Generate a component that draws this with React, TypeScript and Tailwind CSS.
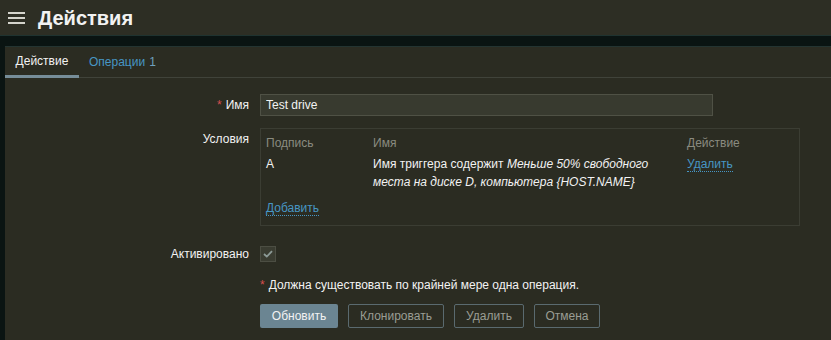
import { useState } from 'react';

const font = { fontFamily: '"Liberation Sans", Arial, sans-serif' };

export default function App() {
  const [name, setName] = useState('Test drive');
  const [enabled, setEnabled] = useState(true);

  return (
    <div className="w-[831px] h-[340px] overflow-hidden bg-[#0a1412] text-[12px] text-[#f2f2f2]" style={font}>
      <header className="h-[36px] bg-[#2d2e24] flex items-center border-b border-[#1f3330]">
        <button className="ml-[8px] w-[17px] h-[12px] flex flex-col justify-between">
          <span className="block h-[2px] w-full bg-[#d4d4cc]" />
          <span className="block h-[2px] w-full bg-[#d4d4cc]" />
          <span className="block h-[2px] w-full bg-[#d4d4cc]" />
        </button>
        <h1 className="ml-[13px] text-[20px] leading-none font-bold text-[#f2f2f2]">Действия</h1>
      </header>

      <div className="ml-[5px] mt-[10px] h-[294px] bg-[#2b2c22] border-t border-[#243431]">
        <nav className="h-[31px] flex items-end border-b border-[#40433a]">
          <div className="w-[74px] h-[31px] flex items-center justify-center border-b-[3px] border-[#768d99] -mb-px">
            <span className="text-[#f2f2f2]">Действие</span>
          </div>
          <div className="h-[31px] flex items-center ml-[10px]">
            <span className="text-[#4796c4]">Операции</span>
            <span className="ml-[4px] text-[#6fa0bd]">1</span>
          </div>
        </nav>

        <form className="pt-[16px] grid grid-cols-[244px_1fr] gap-x-[11px]">
          <label className="text-right leading-[22px]">
            <span className="text-[#d64e4e] mr-[4px]">*</span>Имя
          </label>
          <input
            className="w-[453px] h-[22px] px-[5px] bg-[#383a2f] border border-[#4f5145] text-[#f2f2f2] outline-none"
            value={name}
            onChange={(e) => setName(e.target.value)}
          />

          <label className="mt-[12px] text-right leading-[22px]">Условия</label>
          <div className="mt-[12px] w-[540px] h-[98px] border border-[#3b3d33] px-[5px] pt-[5px]">
            <div className="grid grid-cols-[107px_314px_1fr] text-[#8a8b80] leading-[18px]">
              <span>Подпись</span>
              <span>Имя</span>
              <span>Действие</span>
            </div>
            <div className="grid grid-cols-[107px_314px_1fr] mt-[3px] leading-[18px]">
              <span>A</span>
              <span>
                Имя триггера содержит <i>Меньше 50% свободного</i>
                <br />
                <i>места на диске D, компьютера {'{HOST.NAME}'}</i>
              </span>
              <span>
                <a className="text-[#4796c4] border-b border-dotted border-[#4796c4] cursor-pointer">Удалить</a>
              </span>
            </div>
            <div className="mt-[8px] leading-[18px]">
              <a className="text-[#4796c4] border-b border-dotted border-[#4796c4] cursor-pointer">Добавить</a>
            </div>
          </div>

          <label className="mt-[20px] text-right leading-[16px]">Активировано</label>
          <div className="mt-[20px]">
            <button
              type="button"
              onClick={() => setEnabled(!enabled)}
              className="w-[16px] h-[16px] bg-[#3a3c31] border border-[#4c4e43] flex items-center justify-center"
            >
              {enabled && (
                <svg width="10" height="8" viewBox="0 0 10 8">
                  <path d="M1 4 L3.8 6.6 L9 1.2" stroke="#8c9a96" strokeWidth="1.8" fill="none" />
                </svg>
              )}
            </button>
          </div>

          <div />
          <p className="mt-[16px] leading-[14px]">
            <span className="text-[#d64e4e] mr-[4px]">*</span>Должна существовать по крайней мере одна операция.
          </p>

          <div />
          <div className="mt-[12px] flex gap-[10px]">
            <button type="button" className="w-[78px] h-[24px] bg-[#6b8592] text-[#f2f2f2] rounded-[2px]">Обновить</button>
            <button type="button" className="w-[96px] h-[24px] border border-[#5a6a6f] text-[#9a9d94] rounded-[2px]">Клонировать</button>
            <button type="button" className="w-[70px] h-[24px] border border-[#5a6a6f] text-[#9a9d94] rounded-[2px]">Удалить</button>
            <button type="button" className="w-[66px] h-[24px] border border-[#5a6a6f] text-[#9a9d94] rounded-[2px]">Отмена</button>
          </div>
        </form>
      </div>
    </div>
  );
}
